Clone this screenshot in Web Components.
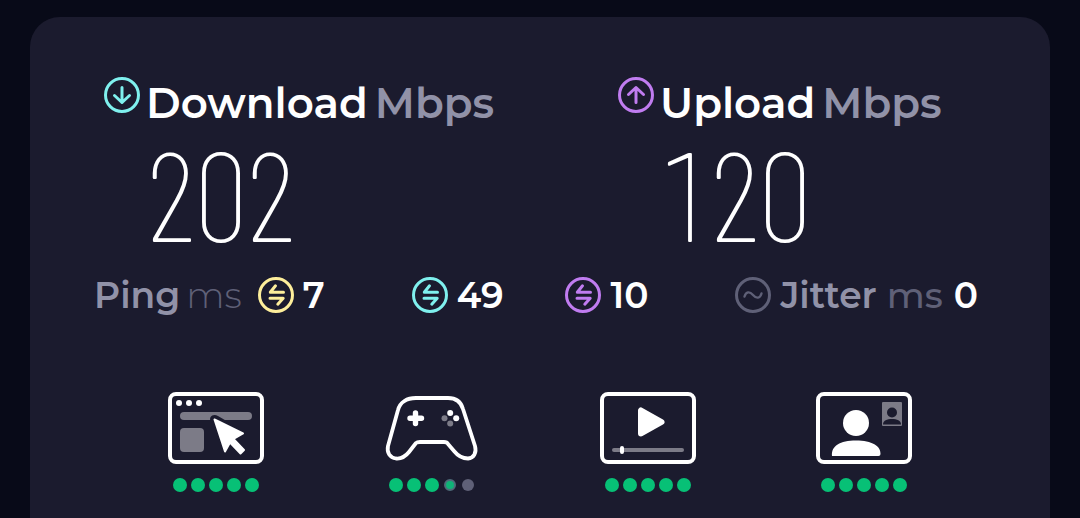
<!DOCTYPE html>
<html lang="en">
<head>
<meta charset="utf-8">
<title>Speed test results</title>
<style>
body{margin:0;background:#080a18;color:#fff;font-family:Montserrat,Inter,sans-serif}
</style>
</head>
<body>
<speed-results></speed-results>
<script>
class BaseElement extends HTMLElement{
  connectedCallback(){
    if(this.shadowRoot)return;
    this.attachShadow({mode:'open'}).innerHTML=this.render();
  }
}

const ROUND={
  down:'<path d="M18 10.500v15M10.500 18.500 18 25.500l7.500-7"/>',
  up:'<path d="M18 25.500v-15M10.500 17.500 18 10.500l7.500 7"/>',
  swap:'<path d="M25.500 15.300H12.300l5.200-6.500M12 21.200h13.200l-5.400 6"/>',
  wave:'<path d="M9.500 19.500c1.500-5 5-5.500 8.500-1.500s7 3.500 8.500-1.500" stroke-width="2.400"/>'
};

customElements.define('round-icon',class extends BaseElement{
  render(){
    return `<style>
      :host{display:block;flex:none;width:36px;height:36px}
      svg{display:block}
    </style>
    <svg width="36" height="36" viewBox="0 0 36 36" fill="none" stroke="currentColor" stroke-width="3" stroke-linecap="round" stroke-linejoin="round" aria-hidden="true">
      <circle cx="18" cy="18" r="16.500"/>${ROUND[this.getAttribute('name')]}
    </svg>`;
  }
});

customElements.define('speed-value',class extends BaseElement{
  render(){
    return `<style>
      :host{display:grid;grid-template-columns:36px auto;justify-content:start;column-gap:6px}
      round-icon{color:var(--accent)}
      .head{font-size:42px;line-height:52px;font-weight:600;white-space:nowrap;display:flex;gap:7px}
      .unit{color:#9192a8}
      .value{grid-column:2;font-family:"Barlow Condensed","Roboto Condensed",sans-serif;font-weight:200;font-size:126px;line-height:126px;font-variant-numeric:tabular-nums}
    </style>
    <round-icon name="${this.getAttribute('icon')}"></round-icon>
    <div class="head"><slot name="label"></slot><span class="unit"><slot name="unit"></slot></span></div>
    <div class="value"><slot></slot></div>`;
  }
});

customElements.define('latency-value',class extends BaseElement{
  render(){
    return `<style>
      :host{display:flex;align-items:center;gap:9px;font-size:36px;line-height:44px;font-weight:600;white-space:nowrap}
      round-icon{color:var(--accent)}
    </style>
    <round-icon name="${this.getAttribute('icon')}"></round-icon><slot></slot>`;
  }
});

const ART={
  web:`<rect x="2" y="2" width="92" height="68" rx="6" fill="none" stroke="#fff" stroke-width="4"/>
    <g fill="#fff"><circle cx="11" cy="11" r="3"/><circle cx="21" cy="11" r="3"/><circle cx="31" cy="11" r="3"/></g>
    <rect x="12" y="20" width="72" height="8" rx="4" fill="#7c7b87"/><rect x="12" y="36" width="24" height="24" rx="4" fill="#7c7b87"/>
    <path d="M43 30c-3-5 2-9 7-6l12 7z" fill="#1b1b2e"/>
    <path d="M46.500 27.500 75 41.500 65.500 47l10.500 11-3.500 3.500-10.500-11-5 9z" fill="#fff" stroke="#fff" stroke-width="2" stroke-linejoin="round"/>`,
  game:`<path d="M32 6H64C72 6 77 10 79 17L91 54C93 61 89.500 66 84 66.500C78 66.500 74 64 70 59L64 52Q63 50 60 50H36Q33 50 32 51L25 60C21 65 17 67 12 66.500C6 65.500 2.500 61 4 54L14 18C16 10 23 6 32 6Z" fill="none" stroke="#fff" stroke-width="3.800" stroke-linejoin="round"/>
    <path d="M31.500 21v10.500M26 26.200h11.500" stroke="#fff" stroke-width="5.400" stroke-linecap="round"/>
    <g fill="#fff"><circle cx="66.200" cy="21" r="3"/><circle cx="72.200" cy="26.200" r="3"/></g><g fill="#7c7b87"><circle cx="60.500" cy="26.200" r="3"/><circle cx="66.200" cy="31.500" r="3"/></g>`,
  video:`<rect x="2" y="2" width="92" height="68" rx="6" fill="none" stroke="#fff" stroke-width="4"/>
    <path d="M41 18.500v23L61.500 30z" fill="#fff" stroke="#fff" stroke-width="6" stroke-linejoin="round"/>
    <rect x="12" y="56" width="72" height="4" rx="2" fill="#7c7b87"/><rect x="20" y="54" width="4" height="8" rx="2" fill="#fff"/>`,
  call:`<rect x="2" y="2" width="92" height="68" rx="6" fill="none" stroke="#fff" stroke-width="4"/>
    <circle cx="40" cy="31" r="13" fill="#fff"/><path d="M16 64c-1-10 8-15.500 24-15.500S65 54 64.500 62q0 2-2 2z" fill="#fff"/>
    <rect x="66" y="10" width="20" height="24" rx="1" fill="#7c7b87"/><circle cx="76" cy="20.500" r="5" fill="#1b1b2e"/><path d="M67 32.500c0-4 4-5.500 9-5.500s9 1.500 9 5.500z" fill="#1b1b2e"/>`
};

customElements.define('score-dots',class extends BaseElement{
  render(){
    const score=Number(this.getAttribute('score'));
    const dots=[0,1,2,3,4].map(i=>`<i class="${score>=i+1?'full':score>i?'part':'none'}"></i>`).join('');
    return `<style>
      :host{display:flex;gap:4px}
      i{box-sizing:border-box;width:14px;height:14px;border-radius:50%;background:#07c076}
      .none,.part{width:12px;height:12px;margin:1px;background:#5f6077}
      .part{background:#0fb377;border:2px solid #4f6b79}
    </style>${dots}`;
  }
});

customElements.define('activity-score',class extends BaseElement{
  render(){
    return `<style>
      :host{display:flex;flex-direction:column;align-items:center;gap:14px}
      svg{display:block}
    </style>
    <svg width="96" height="72" viewBox="0 0 96 72" role="img" aria-label="${this.getAttribute('label')}">${ART[this.getAttribute('kind')]}</svg>
    <score-dots score="${this.getAttribute('score')}" role="img" aria-label="${this.getAttribute('score')} of 5"></score-dots>`;
  }
});

customElements.define('speed-results',class extends BaseElement{
  render(){
    return `<style>
      :host{display:flex;box-sizing:border-box;min-height:100vh;padding:17px 30px 0}
      main{flex:1;min-width:0;box-sizing:border-box;background:#1b1b2e;border-radius:30px 30px 0 0;padding:60px 0 24px}
      .speeds{display:grid;grid-template-columns:1fr 1fr;column-gap:82px;padding-left:74px}
      .latency{display:flex;justify-content:space-between;align-items:center;margin-top:18px;padding:0 72px 0 64px;font-size:36px;line-height:44px;font-weight:600;white-space:nowrap}
      .pair{display:flex;gap:62px}
      .ping,.jitter{display:flex;align-items:center}
      .ping .name{display:flex;gap:6px}
      .ping{gap:16px}
      .jitter{gap:11px}
      .name{color:#9192a8}
      .unit{color:#5f6077;font-weight:300}
      .jitter .unit{font-weight:500}
      .down{--accent:#7ff0ee}
      .up{--accent:#c07cf0}
      .idle{--accent:#fdee9b}
      .jit{--accent:#5f6077}
      .activities{display:grid;grid-template-columns:repeat(4,1fr);margin-top:75px;padding:0 78px}
    </style>
    <main>
      <section class="speeds">
        <speed-value class="down" icon="down"><span slot="label">Download</span><span slot="unit">Mbps</span>202</speed-value>
        <speed-value class="up" icon="up"><span slot="label">Upload</span><span slot="unit">Mbps</span>120</speed-value>
      </section>
      <section class="latency">
        <div class="ping"><span class="name">Ping <span class="unit">ms</span></span><latency-value class="idle" icon="swap">7</latency-value></div>
        <div class="pair"><latency-value class="down" icon="swap">49</latency-value><latency-value class="up" icon="swap">10</latency-value></div>
        <div class="jitter"><latency-value class="jit" icon="wave"><span class="name">Jitter <span class="unit">ms</span></span></latency-value><span>0</span></div>
      </section>
      <section class="activities">
        <activity-score kind="web" label="Web browsing" score="5"></activity-score>
        <activity-score kind="game" label="Gaming" score="3.5"></activity-score>
        <activity-score kind="video" label="Video streaming" score="5"></activity-score>
        <activity-score kind="call" label="Video chat" score="5"></activity-score>
      </section>
    </main>`;
  }
});
</script>
</body>
</html>
